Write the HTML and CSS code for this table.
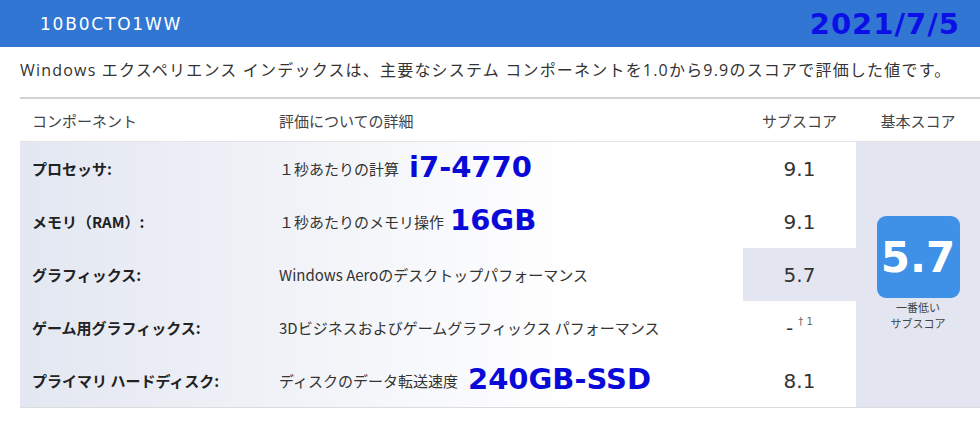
FILE: index.html
```html
<!DOCTYPE html>
<html lang="ja">
<head>
<meta charset="utf-8">
<link rel="stylesheet" href="styles.css">
</head>
<body>
<header class="bar">
  <span class="model">10B0CTO1WW</span>
  <span class="date">2021/7/5</span>
</header>
<p class="desc">Windows エクスペリエンス インデックスは、主要なシステム コンポーネントを1.0から9.9のスコアで評価した値です。</p>
<div class="table">
  <div class="th th-comp">コンポーネント</div>
  <div class="th th-detail">評価についての詳細</div>
  <div class="th th-sub">サブスコア</div>
  <div class="th th-base">基本スコア</div>

  <div class="name">プロセッサ:</div>
  <div class="detail">１秒あたりの計算<span class="note n1">i7-4770</span></div>
  <div class="sub">9.1</div>

  <div class="base">
    <div class="badge">5.7</div>
    <div class="badge-cap">
      <div class="cap-line">一番低い</div>
      <div class="cap-line">サブスコア</div>
    </div>
  </div>

  <div class="name">メモリ（RAM）:</div>
  <div class="detail">１秒あたりのメモリ操作<span class="note n2">16GB</span></div>
  <div class="sub">9.1</div>

  <div class="name">グラフィックス:</div>
  <div class="detail">Windows Aeroのデスクトップパフォーマンス</div>
  <div class="sub sub-low">5.7</div>

  <div class="name">ゲーム用グラフィックス:</div>
  <div class="detail">3Dビジネスおよびゲームグラフィックス パフォーマンス</div>
  <div class="sub">-<sup class="fn">† 1</sup></div>

  <div class="name">プライマリ ハードディスク:</div>
  <div class="detail">ディスクのデータ転送速度<span class="note n3">240GB-SSD</span></div>
  <div class="sub">8.1</div>
</div>
</body>
</html>
```

FILE: styles.css
```css
html, body {
  margin: 0;
  padding: 0;
  background: #fff;
}
body {
  width: 980px;
  height: 427px;
  overflow: hidden;
  font-family: "DejaVu Sans", "Noto Sans CJK JP", sans-serif;
  color: #333;
}
.bar {
  height: 47px;
  background: #3176d2;
  display: flex;
  align-items: center;
  justify-content: space-between;
  padding: 0 20px 0 40px;
  box-sizing: border-box;
}
.model {
  color: #fff;
  font-size: 17px;
  letter-spacing: 1.8px;
  font-family: "DejaVu Sans", "Noto Sans CJK JP", sans-serif;
}
.date {
  color: #0c10e6;
  font-weight: bold;
  font-size: 29px;
  letter-spacing: 1px;
}
.desc {
  margin: 0;
  height: 50px;
  line-height: 46px;
  padding-left: 20px;
  font-size: 16px;
  letter-spacing: 1.2px;
  color: #333;
  font-family: "Open Sans", "Noto Sans CJK JP", sans-serif;
  white-space: nowrap;
}
.table {
  margin-left: 20px;
  display: grid;
  grid-template-columns: 250px 473px 113px 124px;
  grid-template-rows: 45px repeat(5, 53px);
  background: linear-gradient(to right, #e3e7f1 0, #ffffff 560px);
  border-bottom: 1px solid #dcdcdc;
}
.th {
  background: #fff;
  border-top: 2px solid #d3d3d3;
  border-bottom: 1px solid #e3e3e3;
  display: flex;
  align-items: center;
  font-size: 15px;
  color: #444;
  font-family: "Noto Sans CJK JP", sans-serif;
}
.th-comp { padding-left: 12px; }
.th-detail { padding-left: 9px; }
.th-sub, .th-base { justify-content: center; }
.name {
  display: flex;
  align-items: center;
  padding-left: 12px;
  font-weight: bold;
  font-size: 15px;
  color: #222;
  font-family: "Noto Sans CJK JP", sans-serif;
}
.detail {
  display: flex;
  align-items: center;
  padding-left: 9px;
  font-size: 15px;
  color: #333;
  font-family: "Noto Sans CJK JP", sans-serif;
  white-space: nowrap;
}
.note {
  font-family: "DejaVu Sans", sans-serif;
  font-weight: bold;
  font-size: 29px;
  color: #0a0ad8;
  margin-left: 10px;
  margin-top: -4px;
}
.n2 { margin-left: 6px; }
.sub {
  display: flex;
  align-items: center;
  justify-content: center;
  font-size: 20px;
  color: #333;
}
.sub-low { background: #e3e6f0; }
.fn {
  font-size: 10px;
  color: #666;
  align-self: flex-start;
  margin-top: 15px;
  margin-left: 5px;
}
.base {
  grid-column: 4;
  grid-row: 2 / span 5;
  background: #e3e6f0;
  display: flex;
  flex-direction: column;
  align-items: center;
  justify-content: center;
  padding-bottom: 2px;
}
.badge {
  width: 83px;
  height: 82px;
  border-radius: 9px;
  background: #3f91e8;
  color: #fff;
  font-weight: bold;
  font-size: 42px;
  display: flex;
  align-items: center;
  justify-content: center;
}
.badge-cap {
  margin-top: 1px;
  text-align: center;
  color: #444;
  font-family: "Noto Sans CJK JP", sans-serif;
}
.cap-line {
  font-size: 11px;
  line-height: 16px;
}
```
